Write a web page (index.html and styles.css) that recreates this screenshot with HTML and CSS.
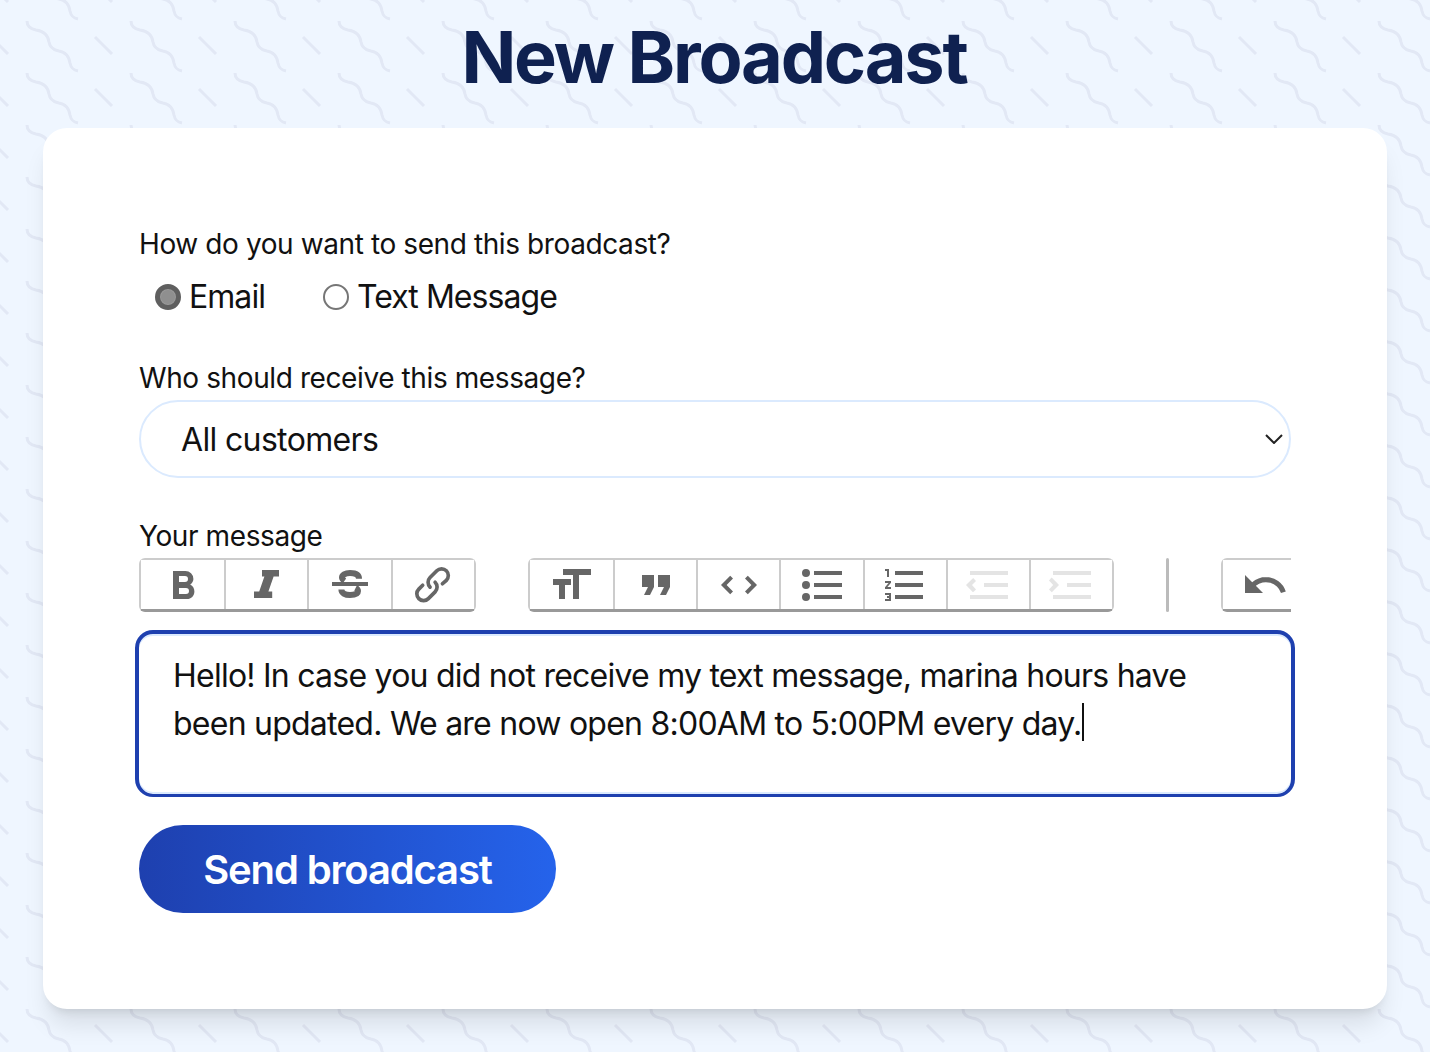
FILE: index.html
```html
<!DOCTYPE html>
<html lang="en">
<head>
<meta charset="utf-8">
<title>New Broadcast</title>
<link rel="stylesheet" href="styles.css">
</head>
<body>
<main class="page">
  <h1 class="title">New Broadcast</h1>
  <form class="card">
    <fieldset class="field field-radio">
      <legend class="label">How do you want to send this broadcast?</legend>
      <div class="radios">
        <label class="radio"><input type="radio" name="kind" checked><span>Email</span></label>
        <label class="radio"><input type="radio" name="kind"><span>Text Message</span></label>
      </div>
    </fieldset>
    <div class="field field-select">
      <label class="label" for="who">Who should receive this message?</label>
      <select id="who" class="select"><option>All customers</option></select>
    </div>
    <div class="field field-message">
      <div class="label">Your message</div>
      <div class="toolbar">
        <div class="group">
          <button type="button" class="tool"><svg viewBox="0 0 24 24"><path d="M15.6 11.8c1-.7 1.6-1.8 1.6-2.8a4 4 0 0 0-4-4H7v14h7c2.1 0 3.7-1.7 3.7-3.8 0-1.5-.8-2.8-2.1-3.4zM10 7.5h3a1.5 1.5 0 1 1 0 3h-3v-3zm3.5 9H10v-3h3.5a1.5 1.5 0 1 1 0 3z"/></svg></button>
          <button type="button" class="tool"><svg viewBox="0 0 24 24"><path d="M9.5 4.500H18v3.200h-2.700l-2.600 7.600h1.900v3.200H5.500v-3.200h2.600l2.600-7.600H9.500z"/></svg></button>
          <button type="button" class="tool"><svg viewBox="0 0 24 24"><path d="M3 10.500h18v2H3z"/><path class="stroke" d="M16.500 8.900C16.500 7 15 6 12 6 9.500 6 8 7 8 8.300c0 .7.5 1.200 1.200 1.700"/><path class="stroke" d="M14.800 13.500c.8.400 1.200.9 1.200 1.500 0 1.200-1.500 2-4 2s-4.300-1-4.300-2.700"/></svg></button>
          <button type="button" class="tool"><svg viewBox="0 0 24 24"><path d="M9.880 13.700a4.300 4.300 0 0 1 0-6.070l3.370-3.370a4.260 4.260 0 0 1 6.070 0 4.300 4.300 0 0 1 0 6.060l-1.960 1.720a.91.91 0 1 1-1.300-1.300l1.970-1.710a2.460 2.460 0 0 0-3.480-3.480l-3.380 3.370a2.460 2.460 0 0 0 0 3.480.91.91 0 1 1-1.300 1.300z"/><path d="M4.250 19.460a4.300 4.300 0 0 1 0-6.070l1.930-1.900a.91.91 0 1 1 1.310 1.300l-1.930 1.900a2.460 2.460 0 0 0 3.480 3.480l3.370-3.380c.96-.96.96-2.520 0-3.480a.91.91 0 1 1 1.300-1.300 4.300 4.300 0 0 1 0 6.070l-3.380 3.380a4.260 4.260 0 0 1-6.080 0z"/></svg></button>
        </div>
        <div class="group">
          <button type="button" class="tool"><svg viewBox="0 0 24 24"><path d="M12 9v3H9v7H6v-7H3V9h9zM8 4h14v3h-6v12h-3V7H8V4z"/></svg></button>
          <button type="button" class="tool"><svg viewBox="0 0 24 24"><path d="M6 17h3l2-4V7H5v6h3zm8 0h3l2-4V7h-6v6h3z"/></svg></button>
          <button type="button" class="tool"><svg viewBox="0 0 24 24"><path d="M18.200 12L15 15.200l1.400 1.400L21 12l-4.600-4.600L15 8.800l3.200 3.200zM5.800 12L9 8.800 7.600 7.400 3 12l4.600 4.600L9 15.200 5.800 12z"/></svg></button>
          <button type="button" class="tool"><svg viewBox="0 0 24 24"><path d="M4 4a2 2 0 1 0 0 4 2 2 0 0 0 0-4zm0 6a2 2 0 1 0 0 4 2 2 0 0 0 0-4zm0 6a2 2 0 1 0 0 4 2 2 0 0 0 0-4zm4 3h14v-2H8v2zm0-6h14v-2H8v2zm0-8v2h14V5H8z"/></svg></button>
          <button type="button" class="tool"><svg viewBox="0 0 24 24"><path d="M2 17h2v.5H3v1h1v.5H2v1h3v-4H2v1zm1-9h1V4H2v1h1v3zm-1 3h1.800L2 13.100v.9h3v-1H3.200L5 10.900V10H2v1zm5-6v2h14V5H7zm0 14h14v-2H7v2zm0-6h14v-2H7v2z"/></svg></button>
          <button type="button" class="tool is-disabled"><svg viewBox="0 0 24 24"><path d="M3 19h19v-2H3v2zm7-6h12v-2H10v2zm-8.300-.3l2.800 2.900L6 14.200 4 12l2-2-1.400-1.500L1 12l.7.7zM3 5v2h19V5H3z"/></svg></button>
          <button type="button" class="tool is-disabled"><svg viewBox="0 0 24 24"><path d="M3 19h19v-2H3v2zm7-6h12v-2H10v2zm-6.900-1L1 14.200l1.400 1.400L6 12l-.7-.7-3-3L1 9.800 3.100 12zM3 5v2h19V5H3z"/></svg></button>
        </div>
        <div class="separator"></div>
        <div class="group">
          <button type="button" class="tool"><svg viewBox="0 0 24 24"><path d="M12.500 8c-2.600 0-5 1-6.900 2.600L2 7v9h9l-3.600-3.600A8 8 0 0 1 20 16l2.400-.8a10.500 10.500 0 0 0-10-7.200z"/></svg></button>
          <button type="button" class="tool is-disabled"><svg viewBox="0 0 24 24"><path d="M18.400 10.600a10.500 10.500 0 0 0-16.900 4.600L4 16a8 8 0 0 1 12.700-3.600L13 16h9V7l-3.600 3.600z"/></svg></button>
        </div>
      </div>
      <div class="editor">Hello! In case you did not receive my text message, marina hours have been updated. We are now open 8:00AM to 5:00PM every day.<span class="caret"></span></div>
    </div>
    <button type="button" class="send">Send broadcast</button>
  </form>
</main>
</body>
</html>
```

FILE: styles.css
```css
* { box-sizing: border-box; }

html, body { margin: 0; height: 100%; }

body {
  overflow: hidden;
  font-family: Inter, "Liberation Sans", sans-serif;
  color: #111;
  background-color: #eff6ff;
  background-image: url("data:image/svg+xml,%3Csvg xmlns='http://www.w3.org/2000/svg' width='104' height='52' viewBox='0 0 104 52'%3E%3Cg fill='none' stroke='%23e2e8f5' stroke-width='3'%3E%3Cpath d='M27 21c0 5 4 8 9 9 7 1 12 5 13 12 1 6 5 8 10 9 6 1 10 5 11 12 1 5 3 7 8 8'/%3E%3Cpath d='M27-31c0 5 4 8 9 9 7 1 12 5 13 12 1 6 5 8 10 9 6 1 10 5 11 12 1 5 3 7 8 8'/%3E%3Cpath d='M95 37l17 17M-9 37L8 54M95-15l17 17M-9-15L8 2'/%3E%3C/g%3E%3C/svg%3E");
}

.page {
  padding: 0 43px;
}

.title {
  margin: 0;
  height: 128px;
  padding: 14px 2px 0 0;
  text-align: center;
  font-size: 72px;
  line-height: 86px;
  font-weight: 700;
  letter-spacing: -2.200px;
  color: #0f2150;
}

.card {
  height: 881px;
  padding: 97px 96px 0;
  background: #fff;
  border-radius: 24px;
  box-shadow: 0 20px 25px -5px rgba(0, 0, 0, .1), 0 8px 10px -6px rgba(0, 0, 0, .1);
}

.field { border: 0; margin: 0; padding: 0; }

.field-radio { height: 134px; }

.label {
  display: block;
  padding: 0;
  height: 40px;
  margin-bottom: 1px;
  font-size: 28px;
  line-height: 39px;
  letter-spacing: -.4px;
}

.radios {
  display: flex;
  gap: 58px;
  padding-left: 16px;
  margin-top: 11px;
}

.radio {
  display: flex;
  align-items: center;
  gap: 8px;
  font-size: 32px;
  line-height: 40px;
  letter-spacing: -.95px;
}

.radio input {
  appearance: none;
  width: 26px;
  height: 26px;
  margin: 0;
  border: 2px solid #767676;
  border-radius: 50%;
  background: #fff;
}

.radio input:checked {
  border: 5px solid #5f5f5f;
  background: #8f8f8f;
  box-shadow: 0 0 0 1px #9a9a9a inset;
}

.field-select { height: 158px; }

.select {
  display: block;
  width: 100%;
  height: 78px;
  padding: 0 40px;
  appearance: none;
  font: inherit;
  font-size: 32px;
  letter-spacing: -.65px;
  color: #111;
  background: #fff url("data:image/svg+xml,%3Csvg xmlns='http://www.w3.org/2000/svg' width='18' height='10' viewBox='0 0 18 10'%3E%3Cpath d='M1 1l8 8 8-8' fill='none' stroke='%23222' stroke-width='2'/%3E%3C/svg%3E") no-repeat right 6px top 32px;
  border: 2px solid #dbeafe;
  border-radius: 39px;
}

.toolbar {
  display: flex;
  height: 54px;
  margin-bottom: 18px;
  overflow: hidden;
}

.group {
  display: flex;
  flex: none;
  height: 54px;
  border: 2px solid #ccc;
  border-bottom: 3px solid #999;
  border-radius: 6px;
  margin-right: 52px;
}

.tool {
  display: flex;
  align-items: center;
  justify-content: center;
  flex: none;
  width: 83.200px;
  padding: 0;
  border: 0;
  border-left: 2px solid #ccc;
  background: #fff;
}

.tool:first-child { border-left: 0; }

.tool svg { width: 48px; height: 48px; fill: #666; }

.tool svg .stroke { fill: none; stroke: #666; stroke-width: 3; }

.tool.is-disabled svg { fill: #e4e4e4; }

.separator {
  flex: none;
  width: 3px;
  height: 54px;
  margin-right: 52px;
  background: #bbb;
  border-radius: 2px;
}

.editor {
  height: 167px;
  margin: 0 -4px;
  padding: 18px 34px;
  border: solid #1e40af;
  border-width: 4px 4px 3px;
  border-radius: 18px;
  box-shadow: inset 0 2px 0 #dbeafe, inset 0 -2px 0 #dbeafe;
  font-size: 32px;
  line-height: 48px;
  letter-spacing: -.76px;
  background: #fff;
}

.caret {
  display: inline-block;
  width: 2px;
  height: 38px;
  vertical-align: -6px;
  background: #111;
}

.send {
  display: block;
  width: 417px;
  height: 88px;
  margin-top: 28px;
  border: 0;
  border-radius: 44px;
  font: inherit;
  font-size: 40px;
  font-weight: 600;
  letter-spacing: -1.150px;
  color: #fff;
  background: linear-gradient(to right, #1e40af, #2563eb);
}
```
